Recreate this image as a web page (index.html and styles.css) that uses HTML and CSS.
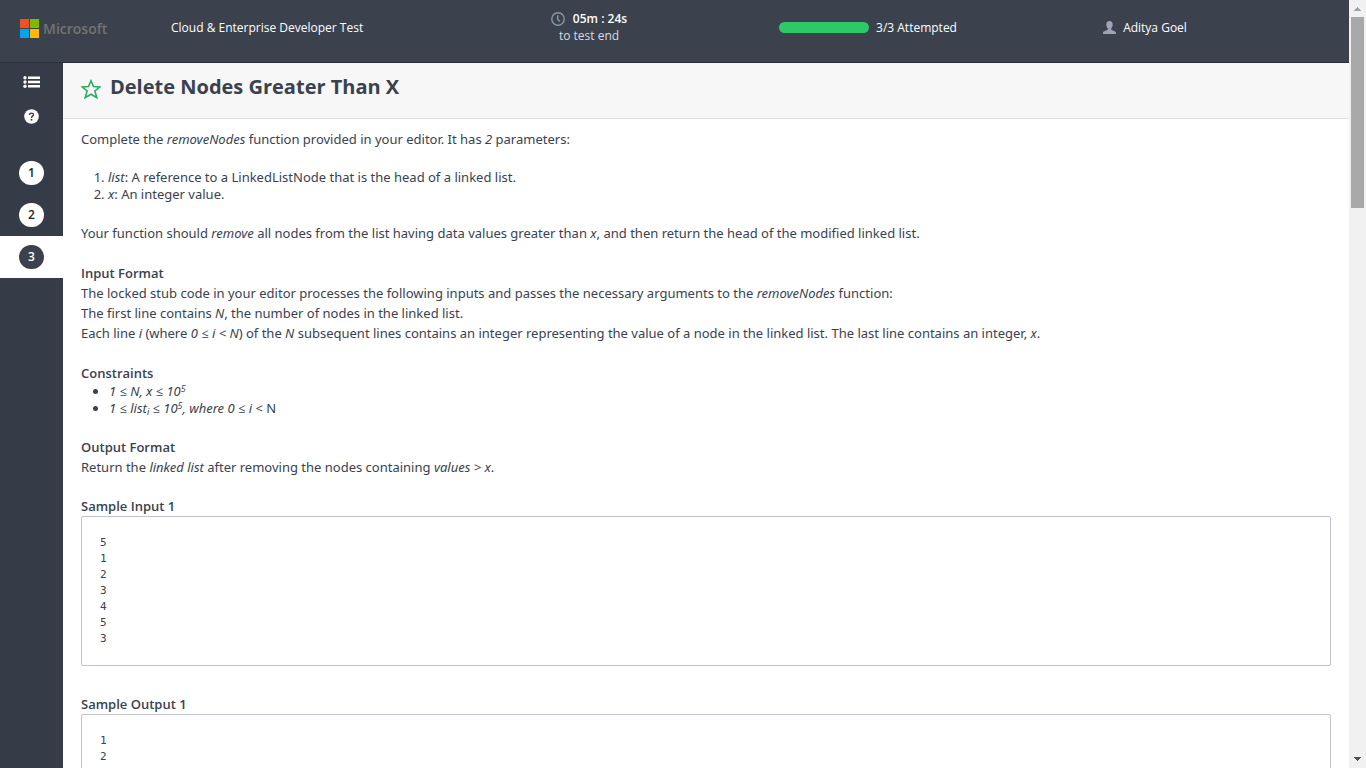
FILE: index.html
```
<!DOCTYPE html>
<html lang="en">
<head>
<meta charset="utf-8">
<title>Cloud &amp; Enterprise Developer Test</title>
<link rel="stylesheet" href="styles.css">
</head>
<body>
<div class="app">
  <div class="page">
    <header class="topbar">
      <div class="logo">
        <svg class="logo-mark" width="19" height="19" viewBox="0 0 19 19" aria-hidden="true">
          <path fill="#f25022" d="M0 0h9v9H0z"/><path fill="#7fba00" d="M10 0h9v9h-9z"/>
          <path fill="#00a4ef" d="M0 10h9v9H0z"/><path fill="#ffb900" d="M10 10h9v9h-9z"/>
        </svg>
        <span class="logo-name">Microsoft</span>
      </div>
      <div class="test-name">Cloud &amp; Enterprise Developer Test</div>
      <div class="timer">
        <div class="timer-value">
          <svg width="14" height="14" viewBox="0 0 14 14" fill="none" stroke="#8b95a5" stroke-width="1.4" aria-hidden="true"><circle cx="7" cy="7" r="6.2"/><path d="M6.7 3.2v4l2.2 2.2"/></svg>
          <span>05m : 24s</span>
        </div>
        <div class="timer-note">to test end</div>
      </div>
      <div class="attempted">
        <div class="bar"></div>
        <span>3/3 Attempted</span>
      </div>
      <div class="user">
        <svg width="13" height="13" viewBox="0 0 13 13" fill="#9aa5b5" aria-hidden="true"><path d="M6.5 0C4.4 0 3.3 1.4 3.3 3.4c0 1.700.6 3 1.500 3.900v1.200C4.600 9.500 0 9.700 0 12v1h13v-1c0-2.300-4.600-2.500-4.800-3.500V7.300c.900-.9 1.500-2.200 1.500-3.900C9.700 1.400 8.600 0 6.500 0z"/></svg>
        <span>Aditya Goel</span>
      </div>
    </header>
    <div class="main">
      <nav class="sidebar">
        <button class="tool" aria-label="All questions">
          <svg width="17" height="12" viewBox="0 0 17 12" fill="#fff" aria-hidden="true"><path d="M5 .5h12v2.500H5zM5 4.750h12v2.500H5zM5 9h12v2.500H5z"/><circle cx="2" cy="1.800" r="1.700"/><circle cx="2" cy="6" r="1.700"/><circle cx="2" cy="10.200" r="1.700"/></svg>
        </button>
        <button class="tool" aria-label="Help">
          <svg width="15" height="15" viewBox="0 0 15 15" aria-hidden="true"><circle cx="7.500" cy="7.500" r="7.300" fill="#fff"/><path d="M5.500 6C5.500 3.500 9.500 3.500 9.500 5.800 9.500 7.300 7.500 7.100 7.500 8.900" fill="none" stroke="#353c48" stroke-width="1.400"/><path fill="#353c48" d="M6.700 10h1.600v1.600H6.700z"/></svg>
        </button>
        <div class="questions">
          <a class="question" href="#q1"><span class="dot">1</span></a>
          <a class="question" href="#q2"><span class="dot">2</span></a>
          <a class="question current" href="#q3" aria-current="page"><span class="dot">3</span></a>
        </div>
      </nav>
      <main class="content">
        <div class="title-band">
          <button class="star" aria-label="Bookmark question">
            <svg width="20" height="20" viewBox="0 0 20 20" fill="none" stroke="#27ae60" stroke-width="1.600" aria-hidden="true"><path d="M10 1.800l2.500 5.700 6.300.4-4.900 4.100 1.900 6.700L10 15.200l-5.800 3.500 1.900-6.700-4.900-4.100 6.300-.4z"/></svg>
          </button>
          <h1>Delete Nodes Greater Than X</h1>
        </div>
        <article class="problem">
          <p>Complete the <em>removeNodes</em> function provided in your editor. It has <em>2</em> parameters:</p>
          <ol>
            <li><em>list</em>: A reference to a LinkedListNode that is the head of a linked list.</li>
            <li><em>x</em>: An integer value.</li>
          </ol>
          <p>Your function should <em>remove</em> all nodes from the list having data values greater than <em>x</em>, and then return the head of the modified linked list.</p>
          <section>
            <h2>Input Format</h2>
            <p>The locked stub code in your editor processes the following inputs and passes the necessary arguments to the <em>removeNodes</em> function:</p>
            <p>The first line contains <em>N</em>, the number of nodes in the linked list.</p>
            <p>Each line <em>i</em> (where <em>0 ≤ i &lt; N</em>) of the <em>N</em> subsequent lines contains an integer representing the value of a node in the linked list. The last line contains an integer, <em>x</em>.</p>
          </section>
          <section>
            <h2>Constraints</h2>
            <ul>
              <li><em>1 ≤ N, x ≤ 10<sup>5</sup></em></li>
              <li><em>1 ≤ list<sub>i</sub> ≤ 10<sup>5</sup>, where 0 ≤ i</em> &lt; N</li>
            </ul>
          </section>
          <section>
            <h2>Output Format</h2>
            <p>Return the <em>linked list</em> after removing the nodes containing <em>values &gt; x</em>.</p>
          </section>
          <section class="samples">
            <div>
              <h2>Sample Input 1</h2>
<pre>5
1
2
3
4
5
3</pre>
            </div>
            <div>
              <h2>Sample Output 1</h2>
<pre>1
2
</pre>
            </div>
          </section>
        </article>
      </main>
    </div>
  </div>
  <div class="scrollbar" aria-hidden="true">
    <svg width="17" height="17" viewBox="0 0 17 17" shape-rendering="crispEdges"><path fill="#a3a3a3" d="M5 11h7v-1h-1v-1h-1v-1H9v-1H8v1H7v1H6v1H5z"/></svg>
    <div class="track"><div class="thumb"></div></div>
    <svg width="17" height="17" viewBox="0 0 17 17" shape-rendering="crispEdges"><path fill="#505050" d="M5 6h7v1h-1v1h-1v1H9v1H8V9H7V8H6V7H5z"/></svg>
  </div>
</div>
</body>
</html>
```
FILE: styles.css
```
* { box-sizing: border-box; }

body {
  margin: 0;
  font-family: "Open Sans", "Noto Sans", sans-serif;
  font-size: 13px;
  line-height: 20px;
  color: #39424e;
  background: #fff;
}

h1, h2, p, ol, ul, pre { margin: 0; }

button {
  padding: 0;
  border: 0;
  background: none;
  cursor: pointer;
}

svg { display: block; flex: none; }

.app { display: flex; height: 100vh; overflow: hidden; }
.page { display: flex; flex-direction: column; flex: 1; min-width: 0; }

.topbar {
  display: grid;
  grid-template-columns: 171px 334fr 168fr 390fr 164fr 122fr;
  align-items: start;
  flex: none;
  height: 63px;
  padding-top: 10px;
  border-bottom: 1px solid #2a303c;
  background: #3b424e;
  color: #fff;
  font-size: 12px;
  line-height: 17px;
  white-space: nowrap;
}

.logo { display: flex; align-items: center; gap: 4px; padding: 9px 0 0 20px; }
.logo-name { color: #737373; font-size: 14px; font-weight: 600; line-height: 19px; }
.test-name, .attempted, .user { padding-top: 9px; }
.timer { text-align: center; }
.timer-value { display: flex; justify-content: center; align-items: center; gap: 8px; font-weight: 600; }
.timer-note { color: #d8dbe0; }
.attempted { display: flex; justify-content: center; align-items: center; gap: 7px; }
.bar { width: 90px; height: 11px; border-radius: 6px; background: #2ec866; }
.user { display: flex; justify-content: center; align-items: center; gap: 7px; }

.main { display: flex; flex: 1; min-height: 0; }

.sidebar { flex: none; width: 63px; padding-top: 1px; background: #353c48; }
.tool { display: flex; justify-content: center; align-items: center; width: 100%; height: 35px; }
.questions { padding-top: 18px; }
.question { display: flex; justify-content: center; align-items: center; height: 42px; text-decoration: none; }
.dot {
  width: 25px;
  border-radius: 12px;
  background: #fff;
  color: #222;
  font-size: 12px;
  font-weight: 600;
  line-height: 24px;
  text-align: center;
}
.current { background: #fff; }
.current .dot { background: #3b424e; color: #fff; }

.content { flex: 1; min-width: 0; overflow: hidden; }
.title-band {
  display: flex;
  align-items: center;
  gap: 9px;
  padding: 10px 18px 17px;
  border-bottom: 1px solid #e0e0e0;
  background: #f7f7f7;
}
.star { padding-top: 4px; }
h1 { font-size: 20px; font-weight: 700; line-height: 28px; }

.problem { display: flex; flex-direction: column; gap: 20px; padding: 10px 18px; }
h2 { font-size: 13px; font-weight: 600; line-height: 20px; }
.problem p, ol, ul { font-family: "Noto Sans", "Open Sans", sans-serif; }
ol, ul { line-height: 17px; }
ol { padding-left: 27px; }
ul { padding-left: 28px; }
sup, sub { font-size: 9px; line-height: 0; }
sup { vertical-align: 4px; }
sub { vertical-align: -2px; }
.samples { display: flex; flex-direction: column; gap: 29px; }
.samples h2 { line-height: 19px; }
pre {
  padding: 18px;
  border: 1px solid #c0c4d0;
  border-radius: 2px;
  font-family: "DejaVu Sans Mono", monospace;
  font-size: 11px;
  line-height: 16px;
}

.scrollbar { display: flex; flex-direction: column; flex: none; width: 17px; background: #f1f1f1; }
.track { flex: 1; padding: 0 2px; }
.thumb { height: 26%; background: #a8a8a8; }
```
